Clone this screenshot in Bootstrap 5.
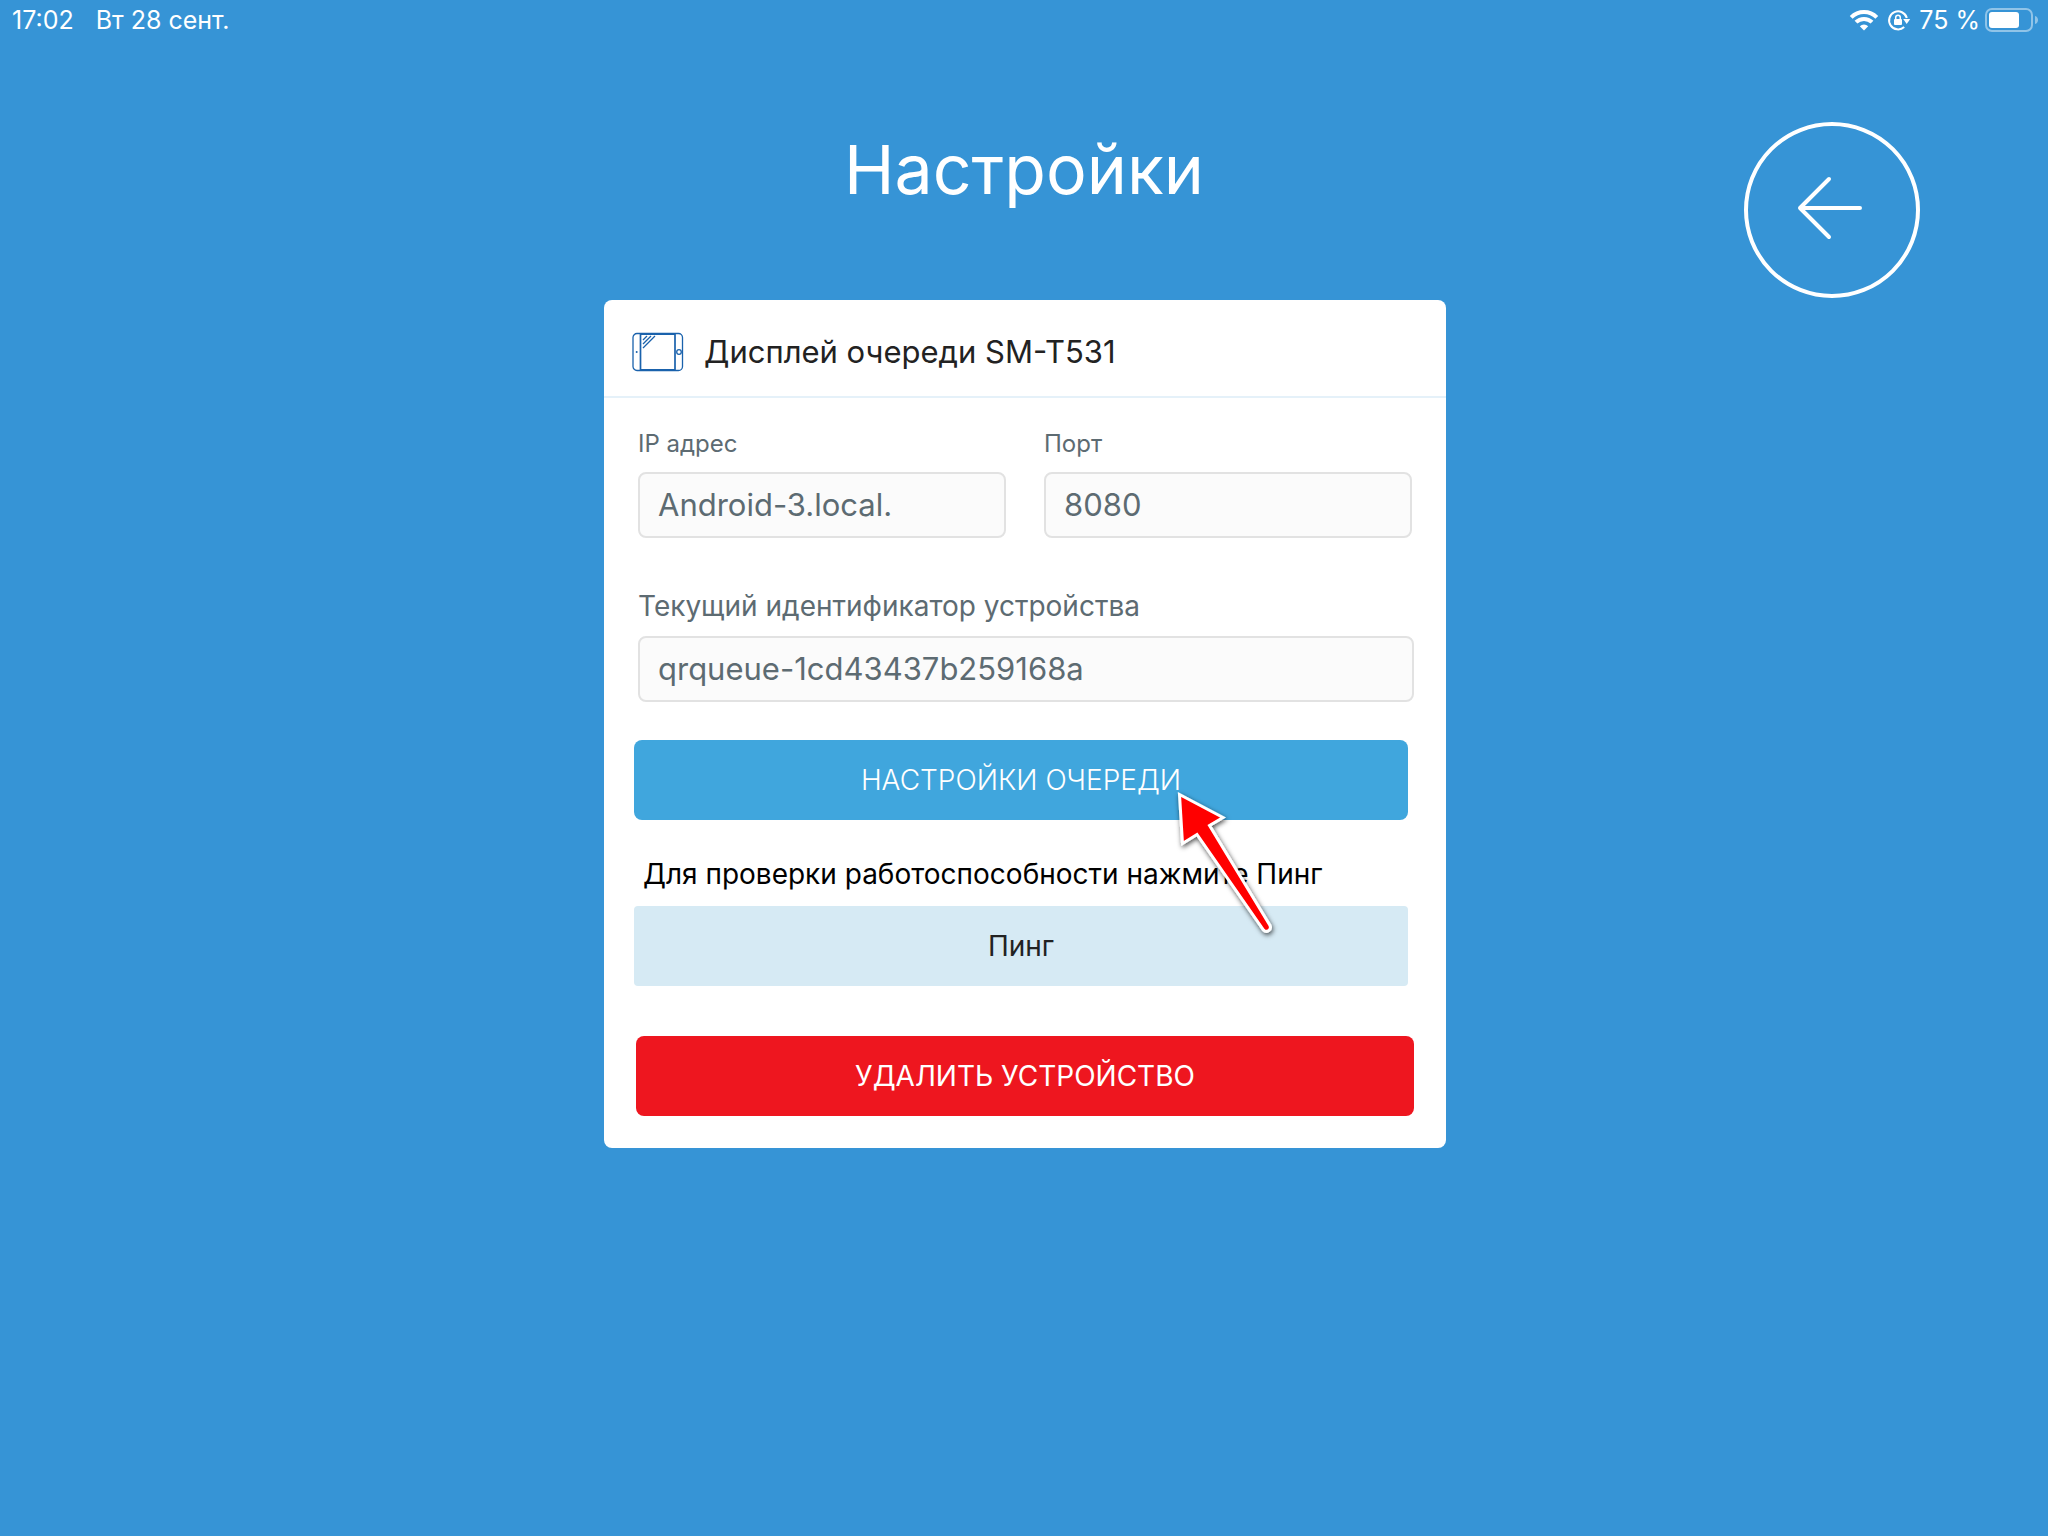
<!DOCTYPE html>
<html lang="ru">
<head>
<meta charset="utf-8">
<meta name="viewport" content="width=device-width, initial-scale=1">
<title>Настройки</title>
<link href="https://cdn.jsdelivr.net/npm/bootstrap@5.3.0/dist/css/bootstrap.min.css" rel="stylesheet">
<style>
  body { background: #3694d6; color: #fff; font-family: Inter, "Noto Sans", sans-serif; font-size: 28px; line-height: 40px; }
  .status-bar { height: 40px; padding: 0 10px 0 12px; font-size: 25px; line-height: 40px; }
  .status-date { margin-left: 22px; }
  .page-head { display: grid; grid-template-columns: 1fr auto 1fr; padding: 82px 128px 2px; }
  .page-title { grid-column: 2; font-size: 68px; line-height: 94px; font-weight: 400; }
  .back-btn { width: 176px; height: 176px; border: 4px solid #fff; background: none; color: #fff; }
  .page-body { padding-left: 2px; }
  .device-card { max-width: 842px; border: 0; border-radius: 8px; color: #000; }
  .device-head { padding: 8px 28px 0; min-height: 98px; border-bottom: 2px solid #e5f1f9; gap: 20px; }
  .device-name { font-size: 31px; line-height: 40px; font-weight: 400; color: #222; }
  .fields { padding: 30px 32px 38px 34px; }
  .field-pair { gap: 38px; padding-right: 2px; margin-bottom: 48px; }
  .field-label { color: #5d6b72; line-height: 40px; margin-bottom: 10px; }
  .field-pair .field-label { font-size: 24px; line-height: 32px; margin-bottom: 12px; }
  .field-box, .field-box:focus { height: 66px; padding: 0 18px 2px; border: 2px solid #e2e2e2; border-radius: 8px; background: #fbfbfb; color: #5d6b72; font-size: 31px; }
  .actions { padding: 0 38px 0 30px; }
  .action-btn { height: 80px; border: 0; border-radius: 8px; font-size: 28px; line-height: 40px; }
  .btn-queue { background: #40a6dd; color: #fff; font-weight: 300; }
  .btn-ping { background: #d6eaf4; color: #222; border-radius: 4px; }
  .btn-remove { background: #ee161f; color: #fff; }
  .ping-hint { margin: 34px 0 12px 9px; }
  .danger-zone { padding: 50px 32px 32px; }
  .pointer { left: 566px; top: 485px; pointer-events: none; }
</style>
</head>
<body class="min-vh-100">
<header class="status-bar d-flex justify-content-between align-items-center">
  <div><span>17:02</span><span class="status-date">Вт 28 сент.</span></div>
  <div class="d-flex align-items-center">
    <svg width="30" height="22" viewBox="0 0 30 22" fill="none" stroke="#fff" stroke-width="4" aria-hidden="true">
      <path d="M2.2 8.4a18 18 0 0 1 25.6 0"/><path d="M7 13.2a11.300 11.300 0 0 1 16 0"/><path d="M15 21.500l-4.200-4.300a6 6 0 0 1 8.400 0z" fill="#fff" stroke="none"/>
    </svg>
    <svg class="ms-2" width="24" height="24" viewBox="0 0 24 24" fill="none" aria-hidden="true">
      <path d="M17.200 19A9 9 0 1 1 19.800 10" stroke="#fff" stroke-width="2"/>
      <path d="M16.200 11h7l-3.500 5z" fill="#fff"/>
      <rect x="7" y="11" width="8" height="6" rx="1" fill="#fff"/>
      <path d="M8.700 11.500V9.500a2.300 2.300 0 0 1 4.600 0v2" stroke="#fff" stroke-width="1.500"/>
    </svg>
    <span class="ms-2 me-1">75 %</span>
    <svg width="54" height="26" viewBox="0 0 54 26" fill="none" aria-hidden="true">
      <rect x="2" y="2" width="46" height="22" rx="6" stroke="#fff" stroke-opacity=".45" stroke-width="2"/>
      <rect x="5" y="5" width="30" height="16" rx="3" fill="#fff"/>
      <path d="M51 9c4 1 4 7 0 8z" fill="#fff" fill-opacity=".45"/>
    </svg>
  </div>
</header>

<div class="page-head">
  <h1 class="page-title mb-0">Настройки</h1>
  <button type="button" class="back-btn rounded-circle p-0 ms-auto d-flex align-items-center justify-content-center" aria-label="Назад">
    <svg width="72" height="72" viewBox="0 0 72 72" fill="none" stroke="#fff" stroke-width="4" stroke-linecap="round" stroke-linejoin="round" aria-hidden="true"><path d="M64 34H4M33 5L4 34l29 29"/></svg>
  </button>
</div>

<main class="page-body">
  <div class="card device-card mx-auto">
    <div class="device-head d-flex align-items-center">
      <svg width="52" height="40" viewBox="0 0 52 40" fill="none" stroke="#1a62ac" aria-hidden="true">
        <rect x="1" y="1.500" width="49.500" height="37" rx="4" stroke-width="1.300"/>
        <path d="M8 2H43M8 38H43" stroke-width="2"/>
        <path d="M8.500 1.500V38.500M43 1.500V38.500" stroke-width="1.700"/>
        <path d="M11 8l4-4M11 12l8-8M11 16L23 4" stroke-width="1.300"/>
        <circle cx="47" cy="20" r="2.300" stroke-width="1.300"/><circle cx="4.700" cy="20" r="1" fill="#1a62ac" stroke="none"/>
      </svg>
      <h2 class="device-name mb-0">Дисплей очереди SM-T531</h2>
    </div>
    <form>
      <div class="fields">
        <div class="field-pair d-flex">
          <div class="flex-fill w-50">
            <label class="field-label d-block" for="ip">IP адрес</label>
            <input class="form-control field-box" id="ip" type="text" value="Android-3.local." readonly>
          </div>
          <div class="flex-fill w-50">
            <label class="field-label d-block" for="port">Порт</label>
            <input class="form-control field-box" id="port" type="text" value="8080" readonly>
          </div>
        </div>
        <label class="field-label d-block" for="device-id">Текущий идентификатор устройства</label>
        <input class="form-control field-box" id="device-id" type="text" value="qrqueue-1cd43437b259168a" readonly>
      </div>
      <div class="actions">
        <button type="button" class="btn action-btn btn-queue w-100">НАСТРОЙКИ ОЧЕРЕДИ</button>
        <p class="ping-hint">Для проверки работоспособности нажмите Пинг</p>
        <button type="button" class="btn action-btn btn-ping w-100">Пинг</button>
      </div>
      <div class="danger-zone">
        <button type="button" class="btn action-btn btn-remove w-100">УДАЛИТЬ УСТРОЙСТВО</button>
      </div>
    </form>
    <svg class="pointer position-absolute" width="120" height="165" viewBox="0 0 120 165" aria-hidden="true">
      <defs><filter id="soft" x="-20%" y="-20%" width="140%" height="140%"><feDropShadow dx="1" dy="2" stdDeviation="2.500" flood-opacity=".7"/></filter></defs>
      <path d="M9.500 9.500L53 32.500L39.500 40.500L100 140.500A4 4 0 0 1 93.500 145L27 49.500L12.500 58.500Z" fill="red" stroke="#fff" stroke-width="3" filter="url(#soft)"/>
    </svg>
  </div>
</main>
<script src="https://cdn.jsdelivr.net/npm/bootstrap@5.3.0/dist/js/bootstrap.bundle.min.js"></script>
</body>
</html>
